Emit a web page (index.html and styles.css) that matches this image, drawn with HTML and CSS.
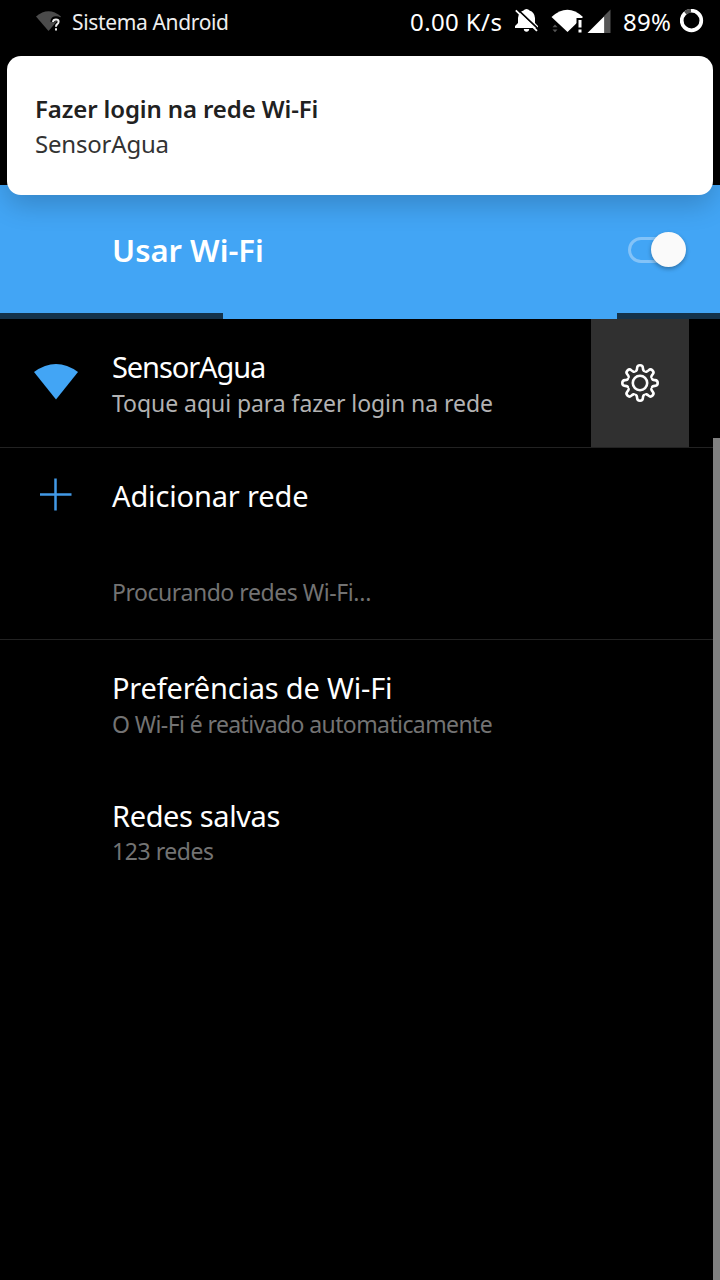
FILE: index.html
```html
<!DOCTYPE html>
<html lang="pt-BR">
<head>
<meta charset="utf-8">
<title>Wi-Fi</title>
<link rel="stylesheet" href="styles.css">
</head>
<body>
<div class="screen">
  <header class="status">
    <svg class="status-wifi" width="26" height="22" viewBox="0 0 26 22"><path d="M0 5.500Q12.500-5 25 5.500L12.500 20Z" fill="#4b4b4b"/><path d="M16.500 11Q17 7.500 20 7.500Q23.500 7.500 23.500 10.500Q23.500 12.500 21.500 13.800Q20.200 14.800 20.200 16.200M20.200 18V20" fill="none" stroke="#000" stroke-width="4.500"/><path d="M17 11Q17.200 8.500 20 8.500Q22.600 8.500 22.600 10.800Q22.600 12.300 21 13.400Q20 14.200 20 15.800M20 17.300V19.500" fill="none" stroke="#eee" stroke-width="2"/></svg>
    <span class="status-app">Sistema Android</span>
    <span class="status-speed">0.00 K/s</span>
    <svg class="status-bell" width="24" height="24" viewBox="0 0 24 24"><path d="M0 19V17L3 14V9Q3.500 3 8.500 1.500Q9.500 0 11.500 0Q13.500 0 14.500 1.500Q19.500 3 20 9V14L23 17V19ZM8.800 20H14.200Q14 22.800 11.500 22.800Q9 22.800 8.800 20Z" fill="#fff"/><path d="M2.300.200L24 20.700" stroke="#000" stroke-width="1.800"/><path d="M.800 1.300L22 21.800" stroke="#fff" stroke-width="1.800"/></svg>
    <svg class="status-signal" width="60" height="26" viewBox="0 0 60 26"><path d="M-.500 8Q15.500-6.500 31 8L15.500 23Z" fill="#fff"/><path d="M24.500 9H32V25H24.500Z" fill="#000"/><path d="M26.500 11H29.500V18.500H26.500ZM26.500 20.500H29.500V23.500H26.500Z" fill="#fff"/><path d="M.500 18.300L3 15.500L5.500 18.300ZM.500 20.500L3 23.300L5.500 20.500Z" fill="#555"/><path d="M35.500 24L52.500 7V24Z" fill="#fff"/><path d="M52.500 6.500L58.500.500V24H52.500Z" fill="#555"/></svg>
    <span class="status-battery">89%</span>
    <svg class="status-ring" width="24" height="24" viewBox="0 0 24 24"><circle cx="11.500" cy="11.500" r="9.800" fill="none" stroke="#fff" stroke-width="3.700"/><path d="M5.200 4A9.800 9.800 0 0 1 11 1.700" fill="none" stroke="#555" stroke-width="3.900"/></svg>
  </header>

  <section class="notice">
    <div class="notice-title">Fazer login na rede Wi-Fi</div>
    <div class="notice-body">SensorAgua</div>
  </section>

  <main class="page">
    <section class="banner">
      <div class="banner-row">
        <span class="banner-title">Usar Wi-Fi</span>
        <div class="switch"><div class="track"></div><div class="thumb"></div></div>
      </div>
      <div class="progress"><i class="dark-start"></i><i class="dark-end"></i></div>
    </section>
    <section class="row network">
      <div class="icon"><svg class="wifi" width="44" height="36" viewBox="0 0 44 36"><path d="M0 8Q22-8 44 8L22 35.500Z" fill="#42a5f5"/></svg></div>
      <div class="copy">
        <div class="title t-sensor">SensorAgua</div>
        <div class="sub light">Toque aqui para fazer login na rede</div>
      </div>
      <div class="settings">
        <svg width="42" height="42" viewBox="-21 -21 42 42" fill="none" stroke="#fff" stroke-width="2.600">
          <defs><path id="tooth" d="M-5.050-12.200C-3.500-11.700-3-13-2.900-15C-2.800-17-1.800-17.700 0-17.700C1.800-17.700 2.800-17 2.900-15C3-13 3.500-11.700 5.050-12.200"/></defs>
          <use href="#tooth"/><use href="#tooth" transform="rotate(45)"/><use href="#tooth" transform="rotate(90)"/><use href="#tooth" transform="rotate(135)"/><use href="#tooth" transform="rotate(180)"/><use href="#tooth" transform="rotate(225)"/><use href="#tooth" transform="rotate(270)"/><use href="#tooth" transform="rotate(315)"/>
          <circle r="7.200"/>
        </svg>
      </div>
    </section>
    <section class="row add">
      <div class="icon"><svg class="plus" width="32" height="33" viewBox="0 0 32 33"><path d="M15.500 .500V32.500M0 16.500H31.500" stroke="#4299e6" stroke-width="2.500"/></svg></div>
      <div class="copy"><div class="title t-add">Adicionar rede</div></div>
    </section>
    <section class="row search"><div class="copy"><div class="sub t-search">Procurando redes Wi-Fi…</div></div></section>
    <section class="row prefs">
      <div class="copy"><div class="title t-prefs">Preferências de Wi-Fi</div><div class="sub t-auto">O Wi-Fi é reativado automaticamente</div></div>
    </section>
    <section class="row saved">
      <div class="copy"><div class="title t-saved">Redes salvas</div><div class="sub t-count">123 redes</div></div>
    </section>
  </main>
  <div class="scrollbar"></div>
</div>
</body>
</html>
```
FILE: styles.css
```css
* { box-sizing: border-box; }
body { margin: 0; background: #000; }
.screen { position: relative; width: 720px; height: 1280px; overflow: hidden; background: #000; color: #fff; font-family: "Noto Sans", sans-serif; white-space: nowrap; }
svg { display: block; flex: none; }
.status { display: flex; height: 185px; padding-left: 36px; line-height: 44px; }
.status-wifi { margin-top: 11px; }
.status-app { width: 339px; padding-left: 10px; font-size: 21px; letter-spacing: -.35px; color: #eee; }
.status-speed { width: 114px; padding-left: 9px; font-size: 24px; letter-spacing: .4px; }
.status-bell { margin-top: 9px; }
.status-signal { width: 60px; margin: 9px 0 0 13px; overflow: visible; }
.status-battery { width: 68px; padding-left: 11px; font-size: 24px; letter-spacing: .3px; }
.status-ring { margin-top: 9px; }
.notice { position: absolute; z-index: 2; left: 7px; top: 56px; width: 706px; height: 139px; padding: 35px 28px; border-radius: 14px; background: #fff; color: #212121; box-shadow: 0 9px 28px rgba(0,0,0,.2); }
.notice-title { height: 35px; line-height: 36px; font-size: 24px; font-weight: 600; letter-spacing: -.12px; }
.notice-body { height: 35px; line-height: 36px; font-size: 24px; letter-spacing: -.2px; color: #333; }
.banner { height: 134px; background: #42a5f5; }
.banner-row { display: flex; height: 128px; padding: 1px 34px 0 112px; justify-content: space-between; align-items: center; font-size: 31px; font-weight: 600; }
.switch { display: flex; align-items: center; width: 58px; height: 36px; }
.track { width: 40px; height: 26px; border: 3px solid #83c3f8; border-radius: 13px; }
.thumb { flex: none; width: 35px; height: 35px; margin-left: -17px; border-radius: 50%; background: #fafafa; box-shadow: 0 2px 4px rgba(0,0,0,.3); }
.progress { display: flex; justify-content: space-between; height: 6px; }
.progress i { background: #14324a; }
.dark-start { width: 223px; }
.dark-end { width: 103px; }
.row { display: flex; }
.row > .copy:first-child { margin-left: 112px; }
.icon { width: 112px; }
.copy { flex: 1; }
.title { height: 36px; line-height: 36px; font-size: 29px; }
.sub { height: 36px; line-height: 36px; font-size: 23px; color: #737373; }
.light { color: #b2b2b2; letter-spacing: -.06px; }
.t-sensor { letter-spacing: -1.1px; }
.t-add { letter-spacing: -.15px; }
.t-search { letter-spacing: -.45px; }
.t-prefs { letter-spacing: -.2px; }
.t-auto { letter-spacing: -.6px; }
.t-saved { letter-spacing: -.38px; }
.t-count { letter-spacing: -.45px; }
.network { height: 129px; padding-right: 31px; border-bottom: 1px solid #222; }
.network .copy { padding-top: 30px; }
.wifi { margin: 45px 0 0 34px; }
.settings { display: flex; width: 98px; height: 128px; align-items: center; justify-content: center; background: #303030; }
.add { height: 96px; }
.add .copy { padding-top: 30px; }
.plus { margin: 30px 0 0 40px; }
.search { height: 96px; padding-top: 30px; border-bottom: 1px solid #222; }
.prefs { height: 128px; padding-top: 30px; }
.saved { height: 128px; padding-top: 30px; }
.saved .sub { height: 35px; line-height: 35px; }
.scrollbar { position: absolute; right: 0; top: 438px; width: 7px; height: 842px; background: #808080; }
```
